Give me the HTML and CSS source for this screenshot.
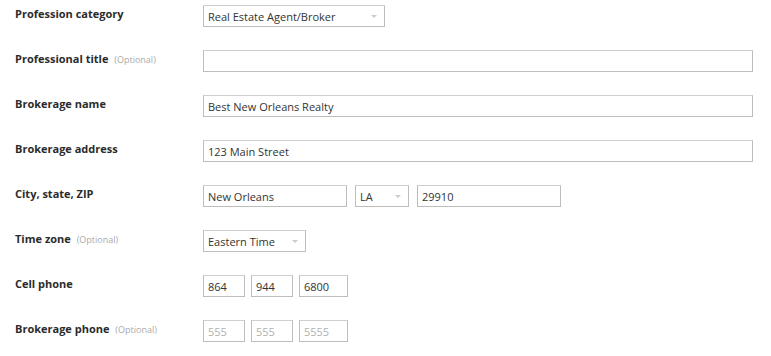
FILE: index.html
```html
<!DOCTYPE html>
<html lang="en">
<head>
<meta charset="utf-8">
<title>Profile form</title>
<link rel="stylesheet" href="styles.css">
</head>
<body>
<form class="form">
  <div class="row">
    <div class="label">Profession category</div>
    <div class="controls">
      <div class="field select w-cat"><span>Real Estate Agent/Broker</span><i class="arrow"></i></div>
    </div>
  </div>
  <div class="row">
    <div class="label">Professional title <span class="opt">(Optional)</span></div>
    <div class="controls">
      <div class="field w-full"></div>
    </div>
  </div>
  <div class="row">
    <div class="label">Brokerage name</div>
    <div class="controls">
      <div class="field w-full"><span>Best New Orleans Realty</span></div>
    </div>
  </div>
  <div class="row">
    <div class="label">Brokerage address</div>
    <div class="controls">
      <div class="field w-full"><span>123 Main Street</span></div>
    </div>
  </div>
  <div class="row">
    <div class="label">City, state, ZIP</div>
    <div class="controls">
      <div class="field w-city"><span>New Orleans</span></div>
      <div class="field select w-state"><span>LA</span><i class="arrow"></i></div>
      <div class="field w-zip"><span>29910</span></div>
    </div>
  </div>
  <div class="row">
    <div class="label">Time zone <span class="opt">(Optional)</span></div>
    <div class="controls">
      <div class="field select w-tz"><span>Eastern Time</span><i class="arrow"></i></div>
    </div>
  </div>
  <div class="row">
    <div class="label">Cell phone</div>
    <div class="controls phone">
      <div class="field w-p3"><span>864</span></div>
      <div class="field w-p3b"><span>944</span></div>
      <div class="field w-p4"><span>6800</span></div>
    </div>
  </div>
  <div class="row">
    <div class="label">Brokerage phone <span class="opt">(Optional)</span></div>
    <div class="controls phone">
      <div class="field ph w-p3"><span>555</span></div>
      <div class="field ph w-p3b"><span>555</span></div>
      <div class="field ph w-p4"><span>5555</span></div>
    </div>
  </div>
</form>
</body>
</html>
```
FILE: styles.css
```css
html, body {
  margin: 0;
  padding: 0;
  background: #ffffff;
}
body {
  font-family: "Open Sans", "Liberation Sans", sans-serif;
  color: #333333;
}
.form {
  display: flex;
  flex-direction: column;
  gap: 23px;
  padding: 5px 0 0 15px;
}
.row {
  display: grid;
  grid-template-columns: 188px 1fr;
  height: 22px;
}
.label {
  font-size: 11px;
  font-weight: 700;
  line-height: 15px;
  color: #2b2b2b;
  padding-top: 1px;
  white-space: nowrap;
}
.opt {
  font-size: 9px;
  font-weight: 400;
  color: #aaaaaa;
  margin-left: 3px;
}
.controls {
  display: flex;
  gap: 8px;
}
.controls.phone {
  gap: 6px;
}
.field {
  position: relative;
  box-sizing: border-box;
  height: 22px;
  border: 1px solid #bdbdbd;
  border-top-color: #cfcfcf;
  background: #ffffff;
  font-size: 11px;
  line-height: 21px;
  padding: 0 4px;
  color: #333333;
  white-space: nowrap;
  overflow: hidden;
}
.field.ph {
  color: #b0b0b0;
}
.arrow {
  position: absolute;
  right: 7px;
  top: 9px;
  width: 0;
  height: 0;
  border-left: 3px solid transparent;
  border-right: 3px solid transparent;
  border-top: 3px solid #cccccc;
}
.w-cat { width: 182px; }
.w-full { width: 550px; }
.w-city { width: 144px; }
.w-state { width: 54px; }
.w-zip { width: 144px; }
.w-tz { width: 103px; }
.w-p3 { width: 42px; }
.w-p3b { width: 42px; }
.w-p4 { width: 49px; }
```
